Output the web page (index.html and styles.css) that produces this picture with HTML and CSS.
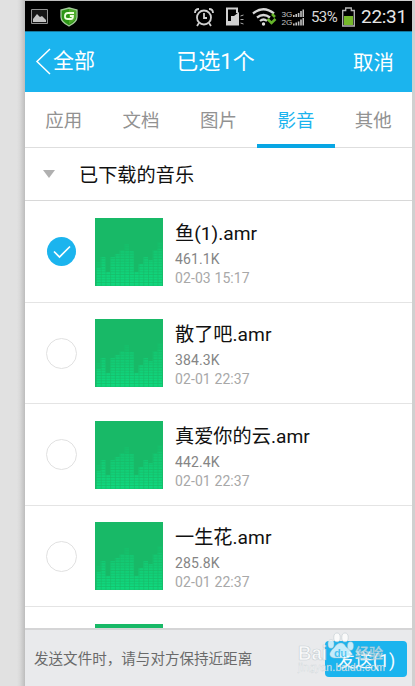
FILE: index.html
```html
<!DOCTYPE html>
<html lang="zh-CN">
<head>
<meta charset="utf-8">
<title>已选1个</title>
<link rel="stylesheet" href="styles.css">
</head>
<body>
<svg class="defs" width="0" height="0" aria-hidden="true">
  <defs>
    <linearGradient id="bar" x1="0" y1="24" x2="0" y2="68" gradientUnits="userSpaceOnUse"><stop offset="0" stop-color="#15c36e"/><stop offset=".5" stop-color="#12cd76"/><stop offset="1" stop-color="#0fda80"/></linearGradient>
    <pattern id="lines" width="4.73" height="2.67" patternUnits="userSpaceOnUse" x="1"><path d="M0 .35H4.73M.35 0V2.67" stroke="#17b966" stroke-width=".7"/></pattern>
    <symbol id="cover" viewBox="0 0 68 68">
      <path fill="#18b967" d="M0 0H68V68H0z"/>
      <path fill="#15c06b" d="M1 44h4.7v24H1zM29.4 26h4.7v8h-4.7zM62.5 24h4.7v8h-4.7z"/>
      <path fill="url(#bar)" d="M1 68V50H5.7V39H10.5V54H15.2V39H19.9V36H24.7V32H29.4V33H38.8V54H43.6V46H48.3V39H53V42H57.8V32H62.5V31H67.2V68z"/>
      <path fill="url(#lines)" d="M1 68V44H5.7V39H10.5V54H15.2V39H19.9V36H24.7V32H29.4V26H34.1V33H38.8V54H43.6V46H48.3V39H53V42H57.8V32H62.5V24H67.2V68z"/>
    </symbol>
  </defs>
</svg>
<main class="phone">
  <div class="status">
    <svg class="notices" width="56" height="30" viewBox="0 0 56 30">
      <path d="M6.500 8.500h16v14h-16z" fill="#161616" stroke="#929292"/>
      <path d="M8 21v-3l4-5 3 3 2-1 4 4v2z" fill="#c5c5c5"/>
      <path d="M44 7l8 2v7q0 5-8 9q-8-4-8-9V9z" fill="#2c9415" stroke="#a4c99b" stroke-width="1.300"/>
      <path d="M44 8v15q6-3 7-7V9z" fill="#64b938" opacity=".6"/>
      <path d="M49 12h-6q-3 0-3 3v1q0 2 3 2h3q2 0 2-3h-3" fill="none" stroke="#efffdf" stroke-width="1.800"/>
    </svg>
    <div class="signals">
      <svg width="112" height="30" viewBox="0 0 112 30">
        <g fill="none" stroke="#d0d0d0" stroke-width="1.800"><circle cx="11" cy="16.500" r="7"/><path d="M11 12v5h3M6 22l-2 3M16 22l2 3M2 12q0-4 4-4M20 12q0-4-4-4"/></g>
        <path d="M34 24V7.500h10V12" fill="none" stroke="#d0d0d0" stroke-width="2"/>
        <path d="M33 20h5v-5h3l5-4v13.500H33z" fill="#d0d0d0"/>
        <path d="M47.500 15l3-1M47.500 18.500h3M47.500 22l3 1" stroke="#aaa"/>
        <g fill="none" stroke="#d7d7d7" stroke-width="2.300"><path d="M60 12.500Q70.500 4 81 12.500"/><path d="M64 16.500Q70.500 11.500 77 16.500"/><path d="M67 20Q70.500 17 74 20"/></g><circle cx="70.500" cy="23" r="1.700" fill="#ddd"/>
        <path d="M74.500 18l4 4 4-4M79 13l3 3" fill="none" stroke="#66b52a" stroke-width="2.500"/>
        <g fill="#c4c4c4" font-family="Liberation Sans" font-size="7.500"><text x="88.500" y="15.500" textLength="11" lengthAdjust="spacingAndGlyphs">3G</text><text x="88.500" y="24" textLength="11" lengthAdjust="spacingAndGlyphs">2G</text><path d="M100 14h1.600v2H100zM102.400 13h1.600v3h-1.600zM104.800 12h1.600v4h-1.600zM107.200 10h1.600v6h-1.600zM109.500 8.500h1.500v7.500h-1.500zM100 22.500h1.600v2H100zM102.400 21.500h1.600v3h-1.600zM104.800 20.500h1.600v4h-1.600zM107.200 18.500h1.600v6h-1.600zM109.500 17h1.500v7.500h-1.500z"/></g>
      </svg>
      <span class="percent">53%</span>
      <svg class="battery" width="13" height="30" viewBox="0 0 13 30"><path d="M.7 9.500h3V7h5.600v2.500h3V25H.7z" fill="none" stroke="#b8b8b8" stroke-width="1.300"/><path d="M2 15h9v9H2z" fill="#76b82a"/></svg>
      <span class="clock">22:31</span>
    </div>
  </div>
  <header class="header">
    <div class="back"><svg width="16" height="27" viewBox="0 0 16 27"><path d="M15 1L2 13.500 15 26" fill="none" stroke="#fff" stroke-width="1.500"/></svg><span>全部</span></div>
    <h1>已选1个</h1>
    <span class="cancel">取消</span>
  </header>
  <nav class="tabs"><span>应用</span><span>文档</span><span>图片</span><span class="active">影音</span><span>其他</span></nav>
  <div class="group"><i class="arrow"></i><span>已下载的音乐</span></div>
  <section class="list">
    <article class="row"><i class="check on"><svg width="18" height="14" viewBox="0 0 18 14"><path d="M1 6.500L6.500 12 17 1.500" fill="none" stroke="#fff" stroke-width="1.700"/></svg></i><svg class="cover"><use href="#cover"/></svg><div class="info"><h2>鱼(1).amr</h2><p>461.1K</p><time>02-03 15:17</time></div></article>
    <article class="row"><i class="check"></i><svg class="cover"><use href="#cover"/></svg><div class="info"><h2>散了吧.amr</h2><p>384.3K</p><time>02-01 22:37</time></div></article>
    <article class="row"><i class="check"></i><svg class="cover"><use href="#cover"/></svg><div class="info"><h2>真爱你的云.amr</h2><p>442.4K</p><time>02-01 22:37</time></div></article>
    <article class="row"><i class="check"></i><svg class="cover"><use href="#cover"/></svg><div class="info"><h2>一生花.amr</h2><p>285.8K</p><time>02-01 22:37</time></div></article>
    <article class="row peek"><svg class="cover"><use href="#cover"/></svg></article>
  </section>
  <footer class="footer">
    <span class="tip">发送文件时，请与对方保持近距离</span>
    <span class="send">发送(1)</span>
    <svg class="watermark" width="92" height="46" viewBox="0 0 92 46">
      <g fill="#fff" fill-opacity=".75" stroke="#aebbc2" stroke-opacity=".6" stroke-width=".7">
        <text class="brand" x="1" y="29" textLength="29" lengthAdjust="spacingAndGlyphs">Bai</text>
        <ellipse cx="34" cy="13" rx="3" ry="4.200"/><ellipse cx="40" cy="6.500" rx="3.200" ry="4.500"/><ellipse cx="48" cy="6.500" rx="3.200" ry="4.500"/><ellipse cx="53.500" cy="15" rx="3" ry="4.200"/>
        <path d="M44 12q3 0 5 4 6 4 5 8-2 5-9 3-4 0-8 0-5-1-4-5 1-3 4-5 3-5 7-5z"/>
        <text class="jingyan" x="58" y="27" textLength="28">经验</text>
      </g>
      <text class="du" x="37" y="26" textLength="13">du</text>
      <text class="site" x="1" y="40" textLength="87">jingyan.baidu.com</text>
    </svg>
  </footer>
</main>
</body>
</html>
```
FILE: styles.css
```css
* { box-sizing: border-box; }
body { margin: 0; width: 415px; height: 686px; overflow: hidden; background: linear-gradient(90deg, #e1e1e1 17px, #d9d9d9 20px, #bdbdbd 25px, #d0d0d0 412px); font-family: Roboto, "Noto Sans CJK SC", sans-serif; padding: 1px 3px 0 25px; }
.defs { position: absolute; }
.phone { width: 387px; height: 685px; background: #fff; display: flex; flex-direction: column; }
.status { height: 30px; flex: none; display: flex; justify-content: space-between; background: #000; color: #d8d8d8; }
.signals { display: flex; align-items: center; padding-right: 5px; }
.percent { font-size: 15px; width: 30px; margin-left: 6px; padding-top: 2px; letter-spacing: -.6px; white-space: nowrap; }
.battery { margin: 0 6px 0 1px; }
.clock { width: 46px; font-size: 19px; letter-spacing: -.3px; color: #e6e6e6; white-space: nowrap; padding-top: 1px; }
.header { height: 61px; flex: none; background: #1bb4ee; color: #fff; display: grid; grid-template-columns: 1fr auto 1fr; align-items: center; padding: 0 18px 0 10px; border-top: 1px solid #16799d; }
.header h1 { font-size: 22px; font-weight: 400; margin: 0; line-height: 32px; position: relative; left: 1px; }
.back { display: flex; align-items: center; gap: 2px; font-size: 21px; line-height: 29px; padding-bottom: 2px; }
.cancel { font-size: 20.5px; text-align: right; padding-bottom: 2px; }
.tabs { height: 56px; flex: none; display: grid; grid-template-columns: repeat(5, 1fr); border-bottom: 1px solid #dedede; color: #929292; font-size: 18.5px; text-align: center; line-height: 58px; }
.tabs span { height: 56px; }
.tabs .active { color: #1bb4ee; border-bottom: 4px solid #08a6e4; }
.group { height: 53px; flex: none; border-bottom: 1px solid #d8d8d8; display: flex; align-items: center; padding-left: 18px; gap: 24px; font-size: 19.2px; color: #111; }
.arrow { border: 6px solid transparent; border-top: 8px solid #b0b0b0; border-bottom: 0; }
.list { height: 427px; overflow: hidden; }
.row { height: 101.5px; display: flex; align-items: center; border-bottom: 1px solid #e4e4e4; padding: 1px 0 0 21px; }
.check { width: 31px; height: 31px; border: 1.5px solid #e1e1e1; border-radius: 50%; flex: none; }
.check.on { width: 29px; height: 29px; margin: 0 1px; border: 0; background: #1bb4ee; display: flex; align-items: center; justify-content: center; }
.cover { width: 68px; height: 68px; margin-left: 18px; flex: none; }
.info { margin-left: 12px; padding-top: 2px; }
.info h2 { margin: 0; font-size: 19.2px; font-weight: 400; line-height: 31px; color: #111; }
.info p, .info time { display: block; margin: 0; font-size: 14px; line-height: 19px; letter-spacing: .1px; color: #858585; }
.info p { line-height: 20px; }
.info time { color: #a8a8a8; }
.peek .cover { margin-left: 49px; }
.footer { height: 58px; flex: none; background: #e9eaec; border-top: 2px solid #d5d5d6; display: flex; justify-content: space-between; padding: 11px 5px 0 9px; position: relative; }
.tip { font-size: 14.55px; color: #6a6a6a; line-height: 37px; }
.send { width: 82px; height: 36px; border-radius: 4px; background: #1bb4ee; color: #f4fcff; font-size: 18px; text-align: center; line-height: 39px; }
.watermark { position: absolute; left: 272px; top: 1px; }
.brand { font: 700 20px "Liberation Sans", sans-serif; }
.jingyan { font: 500 14px "Noto Sans CJK SC", sans-serif; fill-opacity: .6; }
.du { font: 700 11px "Liberation Sans", sans-serif; fill: #1bb4ee; fill-opacity: .75; }
.site { font: 10.5px "Liberation Sans", sans-serif; fill: #fff; fill-opacity: .8; stroke: #aebbc2; stroke-opacity: .5; stroke-width: .4px; }
```
